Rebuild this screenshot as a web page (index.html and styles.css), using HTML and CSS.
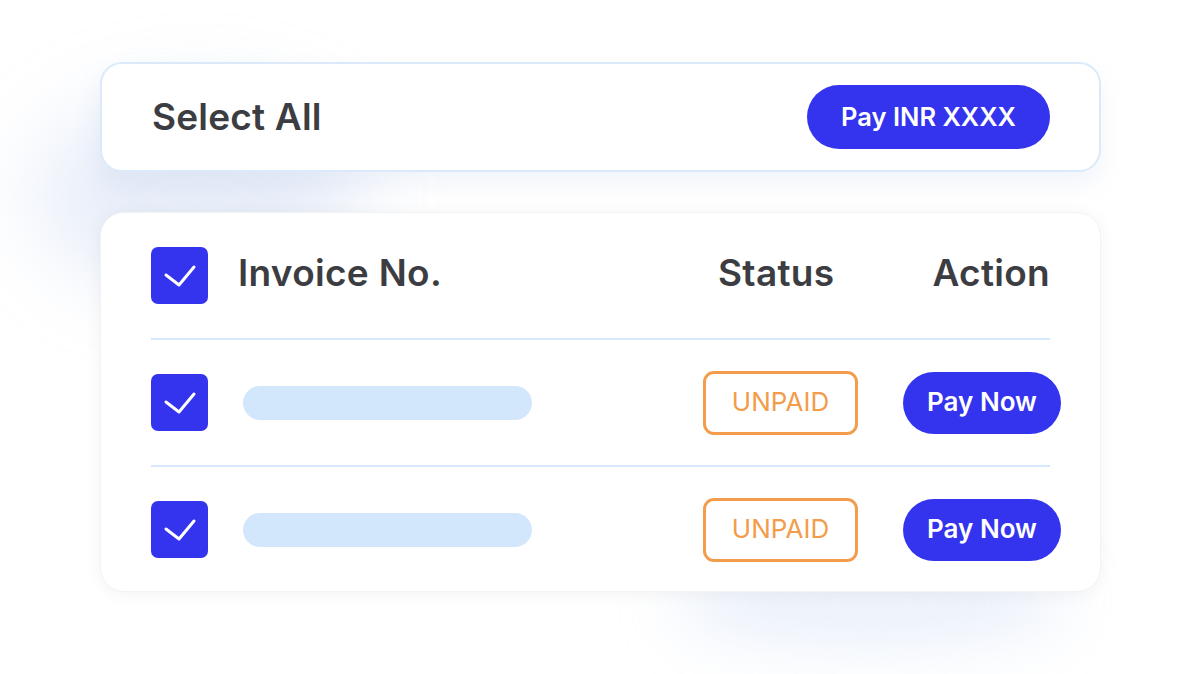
FILE: index.html
```html
<!DOCTYPE html>
<html lang="en">
<head>
    <meta charset="UTF-8">
    <title>Invoices</title>
    <link rel="stylesheet" href="styles.css">
</head>
<body>
<div class="wrap">
    <div class="select-card">
        <span class="select-title">Select All</span>
        <button class="btn btn-total">Pay INR XXXX</button>
    </div>

    <div class="table-card">
        <div class="head-row">
            <span class="check"><svg viewBox="0 0 57 57"><polyline points="15,28 28,38 43,20"/></svg></span>
            <span class="col-invoice">Invoice No.</span>
            <span class="col-status">Status</span>
            <span class="col-action">Action</span>
        </div>
        <div class="row">
            <span class="check"><svg viewBox="0 0 57 57"><polyline points="15,28 28,38 43,20"/></svg></span>
            <span class="bar"></span>
            <span class="badge">UNPAID</span>
            <button class="btn btn-pay">Pay Now</button>
        </div>
        <div class="row">
            <span class="check"><svg viewBox="0 0 57 57"><polyline points="15,28 28,38 43,20"/></svg></span>
            <span class="bar"></span>
            <span class="badge">UNPAID</span>
            <button class="btn btn-pay">Pay Now</button>
        </div>
    </div>
</div>
</body>
</html>
```

FILE: styles.css
```css
* {
    padding: 0;
    margin: 0;
    box-sizing: border-box;
}
body {
    width: 1200px;
    height: 674px;
    overflow: hidden;
    background: #ffffff;
    font-family: Inter, "Liberation Sans", sans-serif;
    color: #3b3d42;
}
.wrap {
    width: 1001px;
    margin-left: 100px;
    padding-top: 62px;
    display: flex;
    flex-direction: column;
    gap: 40px;
}
.select-card {
    position: relative;
    height: 110px;
    border: 2px solid #dbeafb;
    border-radius: 22px;
    background: #fff;
    display: flex;
    align-items: center;
    justify-content: space-between;
    padding: 0 49px 0 50px;
    box-shadow: 0 12px 24px rgba(140, 165, 215, 0.12);
}
/* soft glow behind the top card */
.select-card:before {
    content: '';
    position: absolute;
    left: -70px;
    top: 30px;
    width: 330px;
    height: 200px;
    border-radius: 50%;
    background: rgba(160, 185, 230, 0.24);
    filter: blur(40px);
    z-index: -1;
}
.select-title {
    font-size: 37px;
    font-weight: 600;
    letter-spacing: 0.2px;
    padding-bottom: 2px;
}
.btn {
    border: none;
    color: #fff;
    background: #3433ee;
    font-family: Inter, "Liberation Sans", sans-serif;
    font-weight: 600;
}
.btn-total {
    width: 243px;
    height: 64px;
    border-radius: 32px;
    font-size: 25.5px;
    padding-bottom: 2px;
}
.table-card {
    position: relative;
    height: 380px;
    border: 1px solid #f1f3f7;
    border-radius: 24px;
    background: #fff;
    padding: 34px 50px 0 50px;
    box-shadow: 0 2px 18px rgba(0, 0, 0, 0.05);
}
/* soft glow under the table card */
.table-card:before {
    content: '';
    position: absolute;
    left: 570px;
    top: 345px;
    width: 400px;
    height: 90px;
    border-radius: 50%;
    background: rgba(170, 195, 240, 0.24);
    filter: blur(30px);
    z-index: -1;
}
.check {
    width: 57px;
    height: 57px;
    border-radius: 7px;
    background: #3433ee;
    flex-shrink: 0;
}
.check svg {
    display: block;
    width: 57px;
    height: 57px;
    fill: none;
    stroke: #fff;
    stroke-width: 3;
    stroke-linecap: round;
    stroke-linejoin: round;
}
.head-row {
    display: flex;
    align-items: center;
    height: 57px;
    margin-bottom: 34px;
    font-size: 37px;
    font-weight: 600;
    letter-spacing: 0.3px;
}
.head-row span {
    padding-bottom: 6px;
}
.head-row .check {
    padding-bottom: 0;
}
.col-invoice {
    margin-left: 30px;
    flex: 1;
}
.col-status {
    margin-right: 98px;
}
.row {
    display: flex;
    align-items: center;
    height: 127px;
    border-top: 2px solid #d6e8fb;
}
.bar {
    width: 289px;
    height: 34px;
    border-radius: 17px;
    background: #d3e7fc;
    margin-left: 35px;
}
.badge {
    margin-left: auto;
    width: 155px;
    height: 64px;
    border: 3px solid #f29c4c;
    border-radius: 11px;
    color: #f29c4c;
    font-size: 26px;
    font-weight: 400;
    padding-bottom: 3px;
    display: flex;
    align-items: center;
    justify-content: center;
}
.btn-pay {
    width: 158px;
    height: 62px;
    border-radius: 31px;
    font-size: 26px;
    padding-bottom: 2px;
    margin-left: 45px;
    margin-right: -11px;
}
```
